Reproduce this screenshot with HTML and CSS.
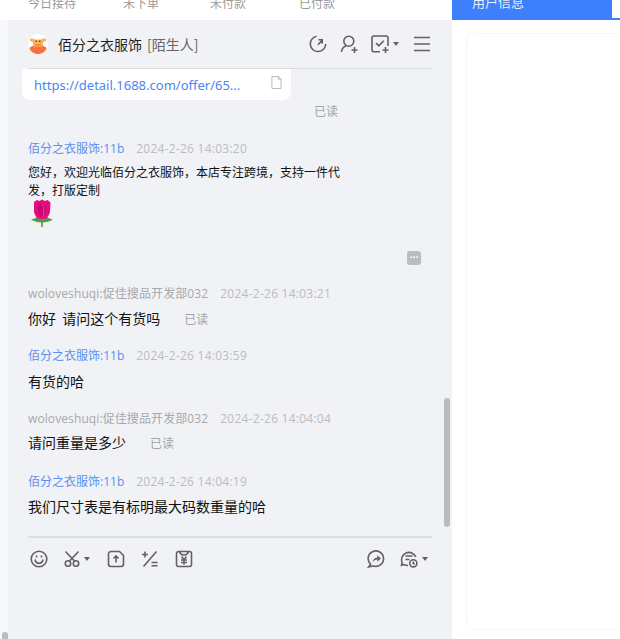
FILE: index.html
```html
<!DOCTYPE html>
<html lang="zh">
<head>
<meta charset="utf-8">
<title>佰分之衣服饰</title>
<link rel="stylesheet" href="styles.css">
</head>
<body>
<div class="page">
  <div class="left">
    <div class="tabs">
      <span class="tab t1">今日接待</span><span class="tab t2">未下单</span><span class="tab t3">未付款</span><span class="tab t4">已付款</span>
    </div>
    <div class="shell">
      <div class="chat">
        <header class="head">
          <svg class="avatar" viewBox="0 0 20 20"><circle cx="10" cy="10" r="10" fill="#fff"/><path d="M1.500 14c1.500-2 5-3 8.500-3s7 1 8.500 3c-.8 3.500-4.500 6-8.500 6s-7.700-2.500-8.500-6z" fill="#f9713f"/><path d="M2 4.500h3.500l1 1h7l1-1H18v2.500l-3 1.300v2.700l-1.500 2h-7L5 11V8.300L2 7z" fill="#f5b565"/><rect x="7.500" y="6.500" width="1.500" height="1.500" fill="#7a4a20"/><rect x="11" y="6.500" width="1.500" height="1.500" fill="#7a4a20"/><rect x="7" y="10" width="6" height="2.500" fill="#ef8f3f"/></svg>
          <span class="name">佰分之衣服饰</span><span class="tag">[陌生人]</span>
          <div class="head-tools">
            <svg class="ic" viewBox="0 0 18 18"><path d="M7.500 1.300a7.700 7.700 0 1 0 9.200 7.700M9 9.800l3.800-4.300M9.400 4.800h3.800v3.800"/></svg>
            <svg class="ic" viewBox="0 0 18 18"><circle cx="8.800" cy="6.200" r="5"/><path d="M1.500 17c.2-3 2-5.300 4.500-6.300M11.500 15h6M14.500 12v6"/></svg>
            <span class="ic-drop">
              <svg class="ic" viewBox="0 0 18 18"><path d="M9 16.800H3a2 2 0 0 1-2-2V3a2 2 0 0 1 2-2h12a2 2 0 0 1 2 2v8M5 8l2.800 2.800 5-5M11.500 15h6M14.500 12v6"/></svg>
              <i class="caret"></i>
            </span>
            <svg class="ic" viewBox="0 0 18 18"><path d="M1 2.500h16M1 9h16M1 15.500h16"/></svg>
          </div>
        </header>
        <div class="thread">
          <div class="card">
            <a class="link">https://detail.1688.com/offer/65...</a>
            <svg class="doc" viewBox="0 0 12 14"><path d="M1 .5h7l3 3V13.500H1zM8 .5v3h3"/></svg>
          </div>
          <div class="read read-right">已读</div>

          <div class="msg m1">
            <div class="meta"><span class="who shop">佰分之衣服饰:11b</span><span class="time">2024-2-26 14:03:20</span></div>
            <div class="small wrap">您好，欢迎光临佰分之衣服饰，本店专注跨境，支持一件代发，打版定制</div>
            <svg class="rose" viewBox="0 0 24 28">
              <path d="M12 18v10" stroke="#5aa83f" stroke-width="1.800" fill="none"/>
              <path d="M1 20.500c3-.3 5-1.500 6-3l5 4 5-4c1 1.500 3 2.700 6 3-3 2-7 3-11 3s-8-1-11-3z" fill="#4f9e3c"/>
              <path d="M4 3l3-2 2.500 1L12 .5l3 1.500 2.500-1 3 2.500-.5 9c-.5 4-3.500 8-8 8s-7.500-4-8-8z" fill="#ea0a80"/>
              <path d="M8.500 4c-1.500 4-1 11 3.500 16.500 3-3 4.500-7 4-11-.5-3-2.500-5-4-6z" fill="#c9066d"/>
              <path d="M12 4.500c2 3 3 9 0 15" stroke="#f5409c" stroke-width="1" fill="none"/>
            </svg>
            <div class="more-row"><span class="more">···</span></div>
          </div>

          <div class="msg m2">
            <div class="meta"><span class="who">woloveshuqi:促佳搜品开发部032</span><span class="time">2024-2-26 14:03:21</span></div>
            <div class="line"><span class="text">你好&nbsp; 请问这个有货吗</span><span class="read">已读</span></div>
          </div>
          <div class="msg m3">
            <div class="meta"><span class="who shop">佰分之衣服饰:11b</span><span class="time">2024-2-26 14:03:59</span></div>
            <div class="line"><span class="text">有货的哈</span></div>
          </div>
          <div class="msg m4">
            <div class="meta"><span class="who">woloveshuqi:促佳搜品开发部032</span><span class="time">2024-2-26 14:04:04</span></div>
            <div class="line"><span class="text">请问重量是多少</span><span class="read">已读</span></div>
          </div>
          <div class="msg m5">
            <div class="meta"><span class="who shop">佰分之衣服饰:11b</span><span class="time">2024-2-26 14:04:19</span></div>
            <div class="line"><span class="text">我们尺寸表是有标明最大码数重量的哈</span></div>
          </div>
          <div class="thumb"></div>
        </div>
        <footer class="tools">
          <div class="tool-group">
            <svg class="ic" viewBox="0 0 18 18"><circle cx="9" cy="9" r="7.800"/><path d="M5 9.500c.5 2.500 2 3.800 4 3.800s3.500-1.300 4-3.800M6.500 5.500v2M11.500 5.500v2"/></svg>
            <span class="ic-drop scissors-drop">
              <svg class="ic" viewBox="0 0 18 18"><circle cx="4" cy="13.500" r="2.700"/><circle cx="12" cy="13.500" r="2.700"/><path d="M1.500 1.500l9 9.500M14.500 1.500l-9 9.500"/></svg>
              <i class="caret"></i>
            </span>
            <svg class="ic" viewBox="0 0 18 18"><path d="M4 1.500h8.500l4 4V14a2.500 2.500 0 0 1-2.500 2.500H4A2.500 2.500 0 0 1 1.500 14V4A2.500 2.500 0 0 1 4 1.500zM9 12.500v-6M6.500 8.500L9 6l2.500 2.500"/></svg>
            <svg class="ic" viewBox="0 0 18 18"><path d="M15.500 1.500L2.500 16.500M1 4.500h6M4 1.500v6M10.500 12.500h6M10.500 15.800h6"/></svg>
            <svg class="ic" viewBox="0 0 18 18"><path d="M3.500 1.500h11a2 2 0 0 1 2 2v11a2 2 0 0 1-2 2h-11a2 2 0 0 1-2-2v-11a2 2 0 0 1 2-2zM4.500 1.500c.5 2 2.500 3.500 4.500 3.500s4-1.500 4.500-3.500M6.500 6.500L9 9.500l2.500-3M6 10h6M6 12.500h6M9 9.500v5"/></svg>
          </div>
          <div class="tool-group tool-right">
            <svg class="ic" viewBox="0 0 18 18"><path d="M3.600 14.300A7.700 7.700 0 1 1 6.500 16l-4.800.8z"/><path class="solid" d="M5.500 12.500c.3-3 2-4.700 4.800-4.900V5.300l3.700 3.300-3.700 3.200V9.600c-2 0-3.500.9-4.800 2.900z"/></svg>
            <span class="ic-drop">
              <svg class="ic" viewBox="0 0 18 18"><path d="M8 15.500c-1.500 0-2.800-.3-4-1l-2.500.8.600-2.600A7.300 7.300 0 1 1 15.800 7M5.500 6h7M5.500 9.500h4"/><circle cx="13.300" cy="13.300" r="3.600"/><path d="M13.300 11.500v2l1.300.8"/></svg>
              <i class="caret"></i>
            </span>
          </div>
        </footer>
        <div class="page-thumb"></div>
      </div>
    </div>
  </div>
  <aside class="right">
    <div class="right-tabs"><div class="active-tab"><span>用户信息</span></div></div>
    <div class="panel"></div>
  </aside>
</div>
</body>
</html>
```
FILE: styles.css
```css
* { box-sizing: border-box; }
html, body { margin: 0; height: 100%; overflow: hidden; background: #fff; }
body { font-family: "Open Sans", "Noto Sans CJK SC", sans-serif; }
.page { display: flex; width: 620px; height: 639px; }
.left { width: 452px; display: flex; flex-direction: column; flex: none; }
.tabs { height: 20px; overflow: hidden; display: flex; background: #fff; font: 12px/5px "Noto Sans CJK SC", sans-serif; color: #999; padding-left: 28px; }
.tab { display: block; height: 20px; flex: none; }
.t1 { width: 95px; }
.t2 { width: 87px; }
.t3 { width: 89px; }
.t4 { width: 60px; }
.shell { flex: 1; background: #f7f8fa; padding-left: 8px; min-height: 0; }
.chat { position: relative; height: 100%; background: #f0f2f6; display: flex; flex-direction: column; padding: 0 20px; }
.head { height: 49px; flex: none; display: flex; align-items: center; border-bottom: 1px solid #d9dbdc; }
.avatar { width: 20px; height: 20px; flex: none; margin-right: 10px; margin-top: -1px; }
.name { font: 14px/18px "Noto Sans CJK SC", sans-serif; color: #1f1f1f; margin-top: -1px; }
.tag { font: 14px/18px "Noto Sans CJK SC", sans-serif; color: #666; margin-left: 5px; margin-top: -1px; }
.head-tools { margin-left: auto; display: flex; align-items: center; gap: 13px; height: 20px; margin-top: -1px; padding-right: 1px; }
.ic { width: 18px; height: 18px; fill: none; stroke: #626262; stroke-width: 1.600; flex: none; display: block; }
.solid { fill: #626262; stroke: none; }
.ic-drop { display: flex; align-items: center; gap: 4px; }
.scissors-drop { gap: 2px; }
.caret { display: block; width: 0; height: 0; border-left: 3px solid transparent; border-right: 3px solid transparent; border-top: 4px solid #626262; margin-right: 1px; }
.thread { position: relative; flex: 1; min-height: 0; }
.card { width: 269px; height: 31px; margin-left: -6px; background: #fff; border-radius: 0 0 8px 8px; display: flex; align-items: center; padding: 0 9px 0 12px; justify-content: space-between; }
.link { font: 13px/16px "Noto Sans", "Noto Sans CJK SC", sans-serif; color: #4c86f0; }
.doc { width: 11px; height: 13px; fill: none; stroke: #b5b5b5; stroke-width: 1; margin-top: -4px; }
.read { font: 12px/16px "Noto Sans CJK SC", sans-serif; color: #a2a5a9; }
.read-right { margin-top: 3px; margin-left: 286px; height: 16px; }
.msg { display: block; }
.meta { height: 16px; display: flex; align-items: center; font: 12px/16px "Open Sans", "Noto Sans CJK SC", sans-serif; }
.who { color: #a8a8a8; letter-spacing: .1px; }
.who.shop { color: #5d8ff0; letter-spacing: 0; }
.time { color: #bcbcbc; margin-left: 12px; letter-spacing: .25px; }
.text { font: 14px/18px "Noto Sans CJK SC", sans-serif; color: #111; }
.small { font: 12px/18px "Noto Sans CJK SC", sans-serif; color: #111; }
.wrap { width: 320px; margin-top: 6px; }
.rose { display: block; width: 24px; height: 28px; margin: 0 0 0 2px; }
.more-row { display: flex; justify-content: flex-end; margin-top: 24px; padding-right: 11px; }
.more { width: 14px; height: 14px; background: #b9bcc3; border-radius: 3px; color: #fff; font: bold 10px/13px "Open Sans", sans-serif; text-align: center; overflow: hidden; }
.line { display: flex; align-items: center; height: 18px; }
.line .read { margin-left: 24px; margin-top: 2px; }
.m1 { margin-top: 22px; }
.m2 { margin-top: 21px; }
.m2 .line { margin-top: 7px; }
.m3 { margin-top: 21px; }
.m3 .line { margin-top: 8px; }
.m4 { margin-top: 21px; }
.m4 .line { margin-top: 6px; }
.m5 { margin-top: 23px; }
.m5 .line { margin-top: 7px; }
.thumb { position: absolute; right: -18px; top: 329px; width: 6px; height: 129px; background: #b9bcc2; border-radius: 3px; }
.tools { height: 103px; flex: none; border-top: 2px solid #dcdee0; display: flex; justify-content: space-between; padding-top: 12px; align-items: flex-start; }
.tool-group { display: flex; align-items: center; gap: 16px; padding-left: 2px; }
.tool-right { gap: 15px; padding-left: 0; padding-right: 3px; }
.page-thumb { position: absolute; left: -6px; bottom: 0; width: 6px; height: 7px; background: #b9bcc2; border-radius: 3px 3px 0 0; }
.right { flex: 1; display: flex; flex-direction: column; background: #fff; }
.right-tabs { height: 20px; border-bottom: 2px solid #3e7ffb; flex: none; }
.active-tab { width: 160px; height: 20px; background: #3e7ffb; color: #e6eeff; font: 13px/4px "Noto Sans CJK SC", sans-serif; padding-left: 20px; overflow: hidden; }
.active-tab span { display: block; height: 20px; }
.panel { margin: 13px 0 9px 14px; flex: 1; background: #fff; border: 1px solid #f6f7f8; border-right: 0; border-radius: 8px 0 0 8px; }
```
